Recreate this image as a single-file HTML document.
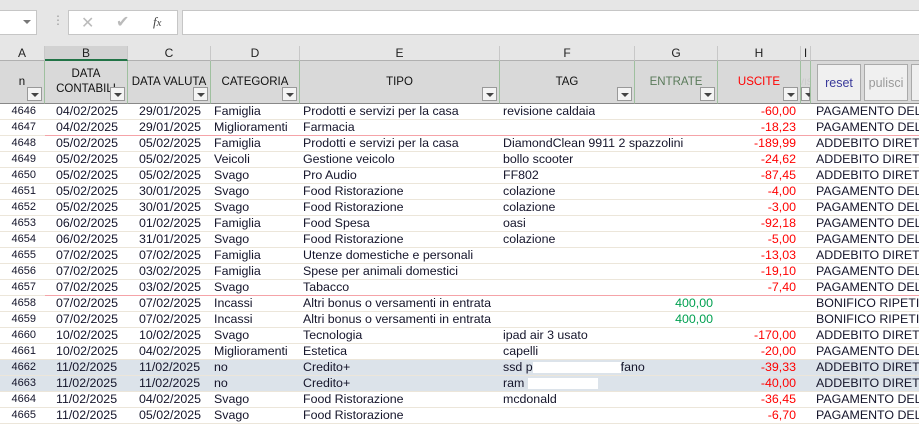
<!DOCTYPE html>
<html><head><meta charset="utf-8"><style>
*{box-sizing:border-box;margin:0;padding:0}
body{width:919px;height:422px;overflow:hidden;background:#fff;font-family:"Liberation Sans",Arial,sans-serif;position:relative}
.a{position:absolute}
.top{left:0;top:0;width:919px;height:46px;background:#e6e6e6}
.cl{top:46px;height:15px;background:#e6e6e6;border-right:1px solid #c8c8c8;border-bottom:1px solid #b0b0b0;font-size:12px;color:#222;text-align:center;line-height:15px}
.hd{top:61px;height:43px;background:#d9d9d9;border-right:1px solid #9fc09f;border-bottom:1px solid #888;font-size:11.5px;color:#111;text-align:center;display:flex;align-items:center;justify-content:center;line-height:15px}
.dd{position:absolute;right:2px;bottom:2px;width:15px;height:14px;background:#f4f4f4;border:1px solid #999}
.dd:after{content:"";position:absolute;left:3px;top:5px;border-left:4px solid transparent;border-right:4px solid transparent;border-top:4px solid #444}
.r{position:absolute;left:0;width:919px;height:16px;border-bottom:1px solid #ece6da;font-size:12.4px;color:#14142a;line-height:15px;white-space:nowrap}
.r span{position:absolute;top:0;overflow:hidden}
.n{left:0;width:36px;text-align:right;font-size:11px}
.b{left:56px}.c{left:139px}.d{left:214px}.e{left:303px;width:196px}.f{left:503px}
.g{left:636px;width:77px;text-align:right;color:#00a050}
.h{left:718px;width:78px;text-align:right;color:#f00}
.j{left:816px}
.sel{background:#dce3ea}
.red:after{content:"";position:absolute;left:45px;right:0;bottom:-1px;height:1px;background:#f5a3a8}
</style></head><body>
<div class="a top"></div>
<div class="a" style="left:0;top:10px;width:37px;height:25px;background:#fff;border:1px solid #c6c6c6;border-left:none"></div>
<div class="a" style="left:23px;top:20px;border-left:4px solid transparent;border-right:4px solid transparent;border-top:4px solid #777"></div>
<div class="a" style="left:52px;top:13px;color:#999;font-size:12px">⋮</div>
<div class="a" style="left:68px;top:10px;width:110px;height:25px;background:#fff;border:1px solid #c6c6c6"></div>
<div class="a" style="left:81px;top:13px;color:#bbb;font-size:16px">✕</div>
<div class="a" style="left:116px;top:12px;color:#bbb;font-size:16px">✔</div>
<div class="a" style="left:153px;top:14px;color:#444;font-size:13px;font-style:italic;font-family:'Liberation Serif',serif">f<small>x</small></div>
<div class="a" style="left:182px;top:10px;width:737px;height:25px;background:#fff;border:1px solid #c6c6c6;border-right:none"></div>

<div class="a cl" style="left:0;width:45px">A</div>
<div class="a cl" style="left:45px;width:83px;background:#d2d2d2;border-bottom:2px solid #217346">B</div>
<div class="a cl" style="left:128px;width:83px">C</div>
<div class="a cl" style="left:211px;width:89px">D</div>
<div class="a cl" style="left:300px;width:200px">E</div>
<div class="a cl" style="left:500px;width:135px">F</div>
<div class="a cl" style="left:635px;width:83px">G</div>
<div class="a cl" style="left:718px;width:83px">H</div>
<div class="a cl" style="left:801px;width:10px">I</div>
<div class="a cl" style="left:811px;width:108px;border-right:none"></div>

<div class="a hd" style="left:0;width:45px">n<div class="dd"></div></div>
<div class="a hd" style="left:45px;width:83px">DATA<br>CONTABILI<div class="dd"></div></div>
<div class="a hd" style="left:128px;width:83px">DATA VALUTA<div class="dd"></div></div>
<div class="a hd" style="left:211px;width:89px">CATEGORIA<div class="dd"></div></div>
<div class="a hd" style="left:300px;width:200px">TIPO<div class="dd"></div></div>
<div class="a hd" style="left:500px;width:135px">TAG<div class="dd"></div></div>
<div class="a hd" style="left:635px;width:83px;color:#5a7a5a">ENTRATE<div class="dd"></div></div>
<div class="a hd" style="left:718px;width:83px;color:#f00">USCITE<div class="dd"></div></div>
<div class="a hd" style="left:801px;width:10px;color:#ccc;font-size:9px;overflow:hidden">VIS<div class="dd" style="width:9px;right:0"></div></div>
<div class="a hd" style="left:811px;width:108px;border-right:none"></div>
<div class="a" style="left:817px;top:64px;width:44px;height:37px;background:#f0f0f0;border:1px solid #aaa;font-size:12.5px;color:#3a3a9a;text-align:center;line-height:36px">reset</div>
<div class="a" style="left:864px;top:64px;width:44px;height:37px;background:#f0f0f0;border:1px solid #aaa;font-size:12.5px;color:#999;text-align:center;line-height:36px">pulisci</div>
<div class="a" style="left:911px;top:64px;width:10px;height:37px;background:#f0f0f0;border:1px solid #aaa"></div>

<div class="r" style="top:104px"><span class="n">4646</span><span class="b">04/02/2025</span><span class="c">29/01/2025</span><span class="d">Famiglia</span><span class="e">Prodotti e servizi per la casa</span><span class="f">revisione caldaia</span><span class="h">-60,00</span><span class="j">PAGAMENTO DEL 2</span></div>
<div class="r red" style="top:120px"><span class="n">4647</span><span class="b">04/02/2025</span><span class="c">29/01/2025</span><span class="d">Miglioramenti</span><span class="e">Farmacia</span><span class="h">-18,23</span><span class="j">PAGAMENTO DEL 2</span></div>
<div class="r" style="top:136px"><span class="n">4648</span><span class="b">05/02/2025</span><span class="c">05/02/2025</span><span class="d">Famiglia</span><span class="e">Prodotti e servizi per la casa</span><span class="f">DiamondClean 9911 2 spazzolini</span><span class="h">-189,99</span><span class="j">ADDEBITO DIRETTO</span></div>
<div class="r" style="top:152px"><span class="n">4649</span><span class="b">05/02/2025</span><span class="c">05/02/2025</span><span class="d">Veicoli</span><span class="e">Gestione veicolo</span><span class="f">bollo scooter</span><span class="h">-24,62</span><span class="j">ADDEBITO DIRETTO</span></div>
<div class="r" style="top:168px"><span class="n">4650</span><span class="b">05/02/2025</span><span class="c">05/02/2025</span><span class="d">Svago</span><span class="e">Pro Audio</span><span class="f">FF802</span><span class="h">-87,45</span><span class="j">ADDEBITO DIRETTO</span></div>
<div class="r" style="top:184px"><span class="n">4651</span><span class="b">05/02/2025</span><span class="c">30/01/2025</span><span class="d">Svago</span><span class="e">Food Ristorazione</span><span class="f">colazione</span><span class="h">-4,00</span><span class="j">PAGAMENTO DEL 3</span></div>
<div class="r" style="top:200px"><span class="n">4652</span><span class="b">05/02/2025</span><span class="c">30/01/2025</span><span class="d">Svago</span><span class="e">Food Ristorazione</span><span class="f">colazione</span><span class="h">-3,00</span><span class="j">PAGAMENTO DEL 3</span></div>
<div class="r" style="top:216px"><span class="n">4653</span><span class="b">06/02/2025</span><span class="c">01/02/2025</span><span class="d">Famiglia</span><span class="e">Food Spesa</span><span class="f">oasi</span><span class="h">-92,18</span><span class="j">PAGAMENTO DEL 0</span></div>
<div class="r" style="top:232px"><span class="n">4654</span><span class="b">06/02/2025</span><span class="c">31/01/2025</span><span class="d">Svago</span><span class="e">Food Ristorazione</span><span class="f">colazione</span><span class="h">-5,00</span><span class="j">PAGAMENTO DEL 3</span></div>
<div class="r" style="top:248px"><span class="n">4655</span><span class="b">07/02/2025</span><span class="c">07/02/2025</span><span class="d">Famiglia</span><span class="e">Utenze domestiche e personali</span><span class="h">-13,03</span><span class="j">ADDEBITO DIRETTO</span></div>
<div class="r" style="top:264px"><span class="n">4656</span><span class="b">07/02/2025</span><span class="c">03/02/2025</span><span class="d">Famiglia</span><span class="e">Spese per animali domestici</span><span class="h">-19,10</span><span class="j">PAGAMENTO DEL 0</span></div>
<div class="r red" style="top:280px"><span class="n">4657</span><span class="b">07/02/2025</span><span class="c">03/02/2025</span><span class="d">Svago</span><span class="e">Tabacco</span><span class="h">-7,40</span><span class="j">PAGAMENTO DEL 0</span></div>
<div class="r" style="top:296px"><span class="n">4658</span><span class="b">07/02/2025</span><span class="c">07/02/2025</span><span class="d">Incassi</span><span class="e">Altri bonus o versamenti in entrata</span><span class="g">400,00</span><span class="j">BONIFICO RIPETITI</span></div>
<div class="r" style="top:312px"><span class="n">4659</span><span class="b">07/02/2025</span><span class="c">07/02/2025</span><span class="d">Incassi</span><span class="e">Altri bonus o versamenti in entrata</span><span class="g">400,00</span><span class="j">BONIFICO RIPETITI</span></div>
<div class="r" style="top:328px"><span class="n">4660</span><span class="b">10/02/2025</span><span class="c">10/02/2025</span><span class="d">Svago</span><span class="e">Tecnologia</span><span class="f">ipad air 3 usato</span><span class="h">-170,00</span><span class="j">ADDEBITO DIRETTO</span></div>
<div class="r" style="top:344px"><span class="n">4661</span><span class="b">10/02/2025</span><span class="c">04/02/2025</span><span class="d">Miglioramenti</span><span class="e">Estetica</span><span class="f">capelli</span><span class="h">-20,00</span><span class="j">PAGAMENTO DEL 0</span></div>
<div class="r sel" style="top:360px"><span class="n">4662</span><span class="b">11/02/2025</span><span class="c">11/02/2025</span><span class="d">no</span><span class="e">Credito+</span><span class="f">ssd p<b style="display:inline-block;width:88px;height:11px;background:#fff;vertical-align:middle"></b>fano</span><span class="h">-39,33</span><span class="j">ADDEBITO DIRETTO</span></div>
<div class="r sel" style="top:376px"><span class="n">4663</span><span class="b">11/02/2025</span><span class="c">11/02/2025</span><span class="d">no</span><span class="e">Credito+</span><span class="f">ram <b style="display:inline-block;width:70px;height:11px;background:#fff;vertical-align:middle"></b></span><span class="h">-40,00</span><span class="j">ADDEBITO DIRETTO</span></div>
<div class="r" style="top:392px"><span class="n">4664</span><span class="b">11/02/2025</span><span class="c">04/02/2025</span><span class="d">Svago</span><span class="e">Food Ristorazione</span><span class="f">mcdonald</span><span class="h">-36,45</span><span class="j">PAGAMENTO DEL 0</span></div>
<div class="r" style="top:408px"><span class="n">4665</span><span class="b">11/02/2025</span><span class="c">05/02/2025</span><span class="d">Svago</span><span class="e">Food Ristorazione</span><span class="h">-6,70</span><span class="j">PAGAMENTO DEL 0</span></div>
</body></html>
